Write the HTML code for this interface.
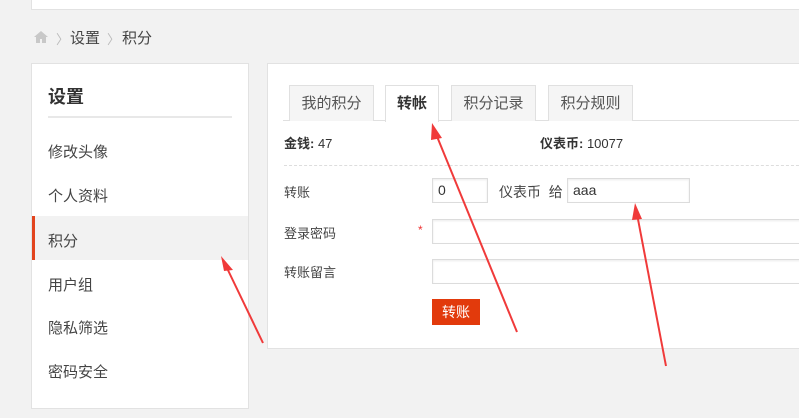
<!DOCTYPE html>
<html><head><meta charset="utf-8"><style>
*{margin:0;padding:0;box-sizing:border-box}
body{width:799px;height:418px;background:#f2f2f2;position:relative;overflow:hidden;font-family:"Liberation Sans","Noto Sans CJK SC",sans-serif;color:#444;font-size:13px}
.a{position:absolute}
.box{background:#fff;border:1px solid #e2e2e2}
.t{position:absolute;white-space:nowrap}
.tab{position:absolute;top:85px;height:36px;border:1px solid #e0e0e0;border-bottom:none;background:#f5f5f5;font-size:15px;color:#555;text-align:center;line-height:36px}
.inp{position:absolute;border:1px solid #dcdcdc;background:#fff;box-shadow:inset 0 1px 2px rgba(0,0,0,.08);height:25px;font-size:14px;line-height:23px;padding-left:5px;color:#333}
.m{position:absolute;left:48px;font-size:15px;color:#444}
</style></head><body>
<div class="a box" style="left:31px;top:-2px;width:780px;height:12px"></div>
<svg class="a" style="left:33px;top:30px" width="16" height="14" viewBox="0 0 16 14"><path d="M8 1L1 7h2v6h4V9h2v4h4V7h2z" fill="#c8c8c8"/></svg>
<div class="t" style="left:56px;top:29px;color:#bbb;font-size:13px">〉</div>
<div class="t" style="left:70px;top:27px;font-size:15px;color:#444">设置</div>
<div class="t" style="left:107px;top:29px;color:#bbb;font-size:13px">〉</div>
<div class="t" style="left:122px;top:27px;font-size:15px;color:#444">积分</div>

<div class="a box" style="left:31px;top:63px;width:218px;height:346px"></div>
<div class="t" style="left:48px;top:83px;font-size:18px;font-weight:bold;color:#333">设置</div>
<div class="a" style="left:48px;top:116px;width:184px;height:2px;background:#e8e8e8"></div>
<div class="m" style="top:141px">修改头像</div>
<div class="m" style="top:185px">个人资料</div>
<div class="a" style="left:32px;top:216px;width:216px;height:44px;background:#f2f2f2;border-left:3px solid #e2441e"></div>
<div class="m" style="top:230px">积分</div>
<div class="m" style="top:274px">用户组</div>
<div class="m" style="top:317px">隐私筛选</div>
<div class="m" style="top:361px">密码安全</div>

<div class="a box" style="left:267px;top:63px;width:540px;height:286px"></div>
<div class="a" style="left:283px;top:120px;width:520px;height:1px;background:#e0e0e0"></div>
<div class="tab" style="left:289px;width:85px">我的积分</div>
<div class="tab" style="left:385px;width:54px;background:#fff;height:37px;font-weight:bold;color:#333">转帐</div>
<div class="tab" style="left:451px;width:85px">积分记录</div>
<div class="tab" style="left:548px;width:85px">积分规则</div>
<div class="t" style="left:284px;top:133px;font-size:13px;color:#333"><b>金钱:</b> 47</div>
<div class="t" style="left:540px;top:133px;font-size:13px;color:#333"><b>仪表币:</b> 10077</div>
<div class="a" style="left:284px;top:165px;width:520px;border-top:1px dashed #ddd"></div>
<div class="t" style="left:284px;top:182px">转账</div>
<div class="inp" style="left:432px;top:178px;width:56px">0</div>
<div class="t" style="left:499px;top:182px;font-size:14px">仪表币&nbsp; 给</div>
<div class="inp" style="left:567px;top:178px;width:123px">aaa</div>
<div class="t" style="left:284px;top:223px">登录密码</div>
<div class="t" style="left:418px;top:223px;color:#e33;font-size:12px">*</div>
<div class="inp" style="left:432px;top:219px;width:380px"></div>
<div class="t" style="left:284px;top:262px">转账留言</div>
<div class="inp" style="left:432px;top:259px;width:380px"></div>
<div class="a" style="left:432px;top:299px;width:48px;height:26px;background:#e23a0c;color:#fff;font-size:14px;text-align:center;line-height:26px">转账</div>

<svg class="a" style="left:0;top:0" width="799" height="418">
<g stroke="#f03a3a" stroke-width="2" fill="#f03a3a">
<line x1="263" y1="343" x2="226" y2="266"/>
<path d="M221 256L233 270L224 271Z" stroke="none"/>
<line x1="517" y1="332" x2="436" y2="134"/>
<path d="M432 123L442 138L431 140Z" stroke="none"/>
<line x1="666" y1="366" x2="637" y2="214"/>
<path d="M635 203L642 219L632 220Z" stroke="none"/>
</g></svg>
</body></html>
